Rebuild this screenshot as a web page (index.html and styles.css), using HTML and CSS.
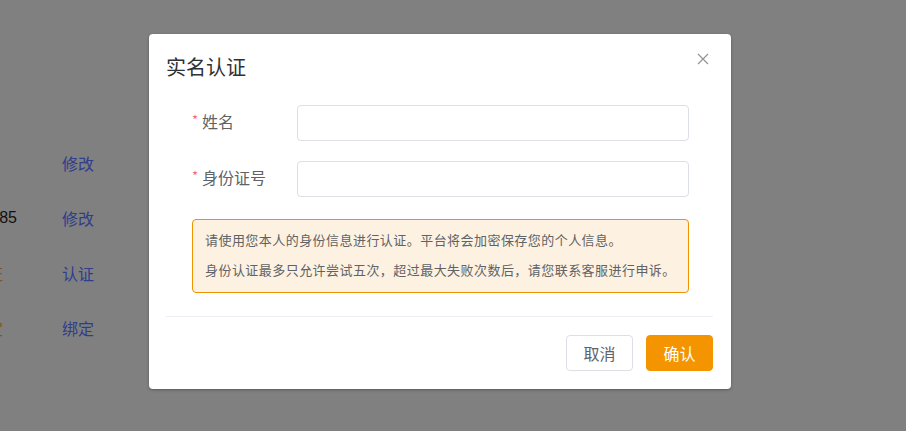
FILE: index.html
```html
<!DOCTYPE html>
<html lang="zh-CN">
<head>
<meta charset="utf-8">
<title>实名认证</title>
<link rel="stylesheet" href="styles.css">
</head>
<body>
<div class="page">
  <div class="rows">
    <div class="row"><span class="val"></span><a class="link">修改</a></div>
    <div class="row"><span class="val">85</span><a class="link">修改</a></div>
    <div class="row"><span class="val warn">证</span><a class="link">认证</a></div>
    <div class="row"><span class="val warn">定</span><a class="link">绑定</a></div>
  </div>
</div>
<div class="dialog">
  <div class="dlg-head">
    <span class="dlg-title">实名认证</span>
    <button class="close" aria-label="关闭">
      <svg width="12" height="12" viewBox="0 0 12 12"><path d="M1 1L11 11M11 1L1 11" stroke="#909399" stroke-width="1.2" fill="none"/></svg>
    </button>
  </div>
  <div class="dlg-body">
    <div class="field">
      <label class="label"><span class="req">*</span>姓名</label>
      <input class="input" type="text">
    </div>
    <div class="field">
      <label class="label"><span class="req">*</span>身份证号</label>
      <input class="input" type="text">
    </div>
    <div class="notice">
      <p>请使用您本人的身份信息进行认证。平台将会加密保存您的个人信息。</p>
      <p>身份认证最多只允许尝试五次，超过最大失败次数后，请您联系客服进行申诉。</p>
    </div>
  </div>
  <div class="divider"></div>
  <div class="dlg-foot">
    <button class="btn">取消</button>
    <button class="btn primary">确认</button>
  </div>
</div>
</body>
</html>
```
FILE: styles.css
```css
html, body {
  margin: 0;
  padding: 0;
}
body {
  width: 906px;
  height: 431px;
  overflow: hidden;
  background: #808080;
  font-family: "Noto Sans CJK SC", "Noto Sans", sans-serif;
  position: relative;
}
.page {
  padding-top: 135px;
}
.rows {
  display: flex;
  flex-direction: column;
}
.row {
  display: flex;
  align-items: center;
  height: 55px;
}
.val {
  width: 40px;
  margin-left: -23px;
  box-sizing: border-box;
  text-align: right;
  font-family: "Liberation Sans", "Noto Sans CJK SC", sans-serif;
  font-size: 16px;
  color: #111;
}
.val.warn {
  padding-right: 14px;
  color: #8a5317;
  font-family: "Noto Sans CJK SC", sans-serif;
}
.link {
  margin-left: 45px;
  font-size: 16px;
  color: #2f3d8c;
}
.dialog {
  position: absolute;
  left: 149px;
  top: 34px;
  width: 582px;
  background: #fff;
  border-radius: 4px;
  box-shadow: 0 1px 3px rgba(0,0,0,0.3);
}
.dlg-head {
  padding: 20px 17px 0;
  height: 26px;
}
.dlg-title {
  font-size: 20px;
  line-height: 26px;
  color: #303133;
}
.close {
  position: absolute;
  right: 22px;
  top: 19px;
  width: 12px;
  height: 12px;
  padding: 0;
  border: 0;
  background: none;
  display: flex;
}
.dlg-body {
  padding: 25px 42px 0 43px;
  display: flex;
  flex-direction: column;
}
.field {
  display: flex;
  align-items: center;
  margin-bottom: 20px;
}
.field:nth-child(2) { margin-bottom: 22px; }
.label {
  width: 105px;
  font-size: 16px;
  line-height: 20px;
  color: #606266;
  display: flex;
  align-items: center;
  position: relative;
  top: -2px;
}
.req {
  color: #f56c6c;
  font-size: 13px;
  margin-right: 4px;
  position: relative;
  top: -1px;
}
.input {
  flex: 1;
  height: 36px;
  box-sizing: border-box;
  border: 1px solid #dcdfe6;
  border-radius: 4px;
  outline: none;
  margin: 0;
}
.notice {
  border: 1px solid #f09300;
  background: #fdf2e1;
  border-radius: 4px;
  padding: 10px 12px 12px;
}
.notice p {
  margin: 0;
  font-size: 13px;
  line-height: 20px;
  letter-spacing: 0.45px;
  color: #606266;
}
.notice p + p {
  margin-top: 10px;
}
.divider {
  margin: 23px 18px 0 17px;
  height: 1px;
  background: #ebeef5;
}
.dlg-foot {
  display: flex;
  justify-content: flex-end;
  gap: 13px;
  padding: 18px 18px 18px;
}
.btn {
  width: 67px;
  height: 36px;
  box-sizing: border-box;
  border: 1px solid #dcdfe6;
  border-radius: 4px;
  background: #fff;
  color: #606266;
  font-family: "Noto Sans CJK SC", sans-serif;
  font-size: 16px;
  padding: 0;
}
.btn.primary {
  background: #f39400;
  border-color: #f39400;
  color: #fff;
}
```
